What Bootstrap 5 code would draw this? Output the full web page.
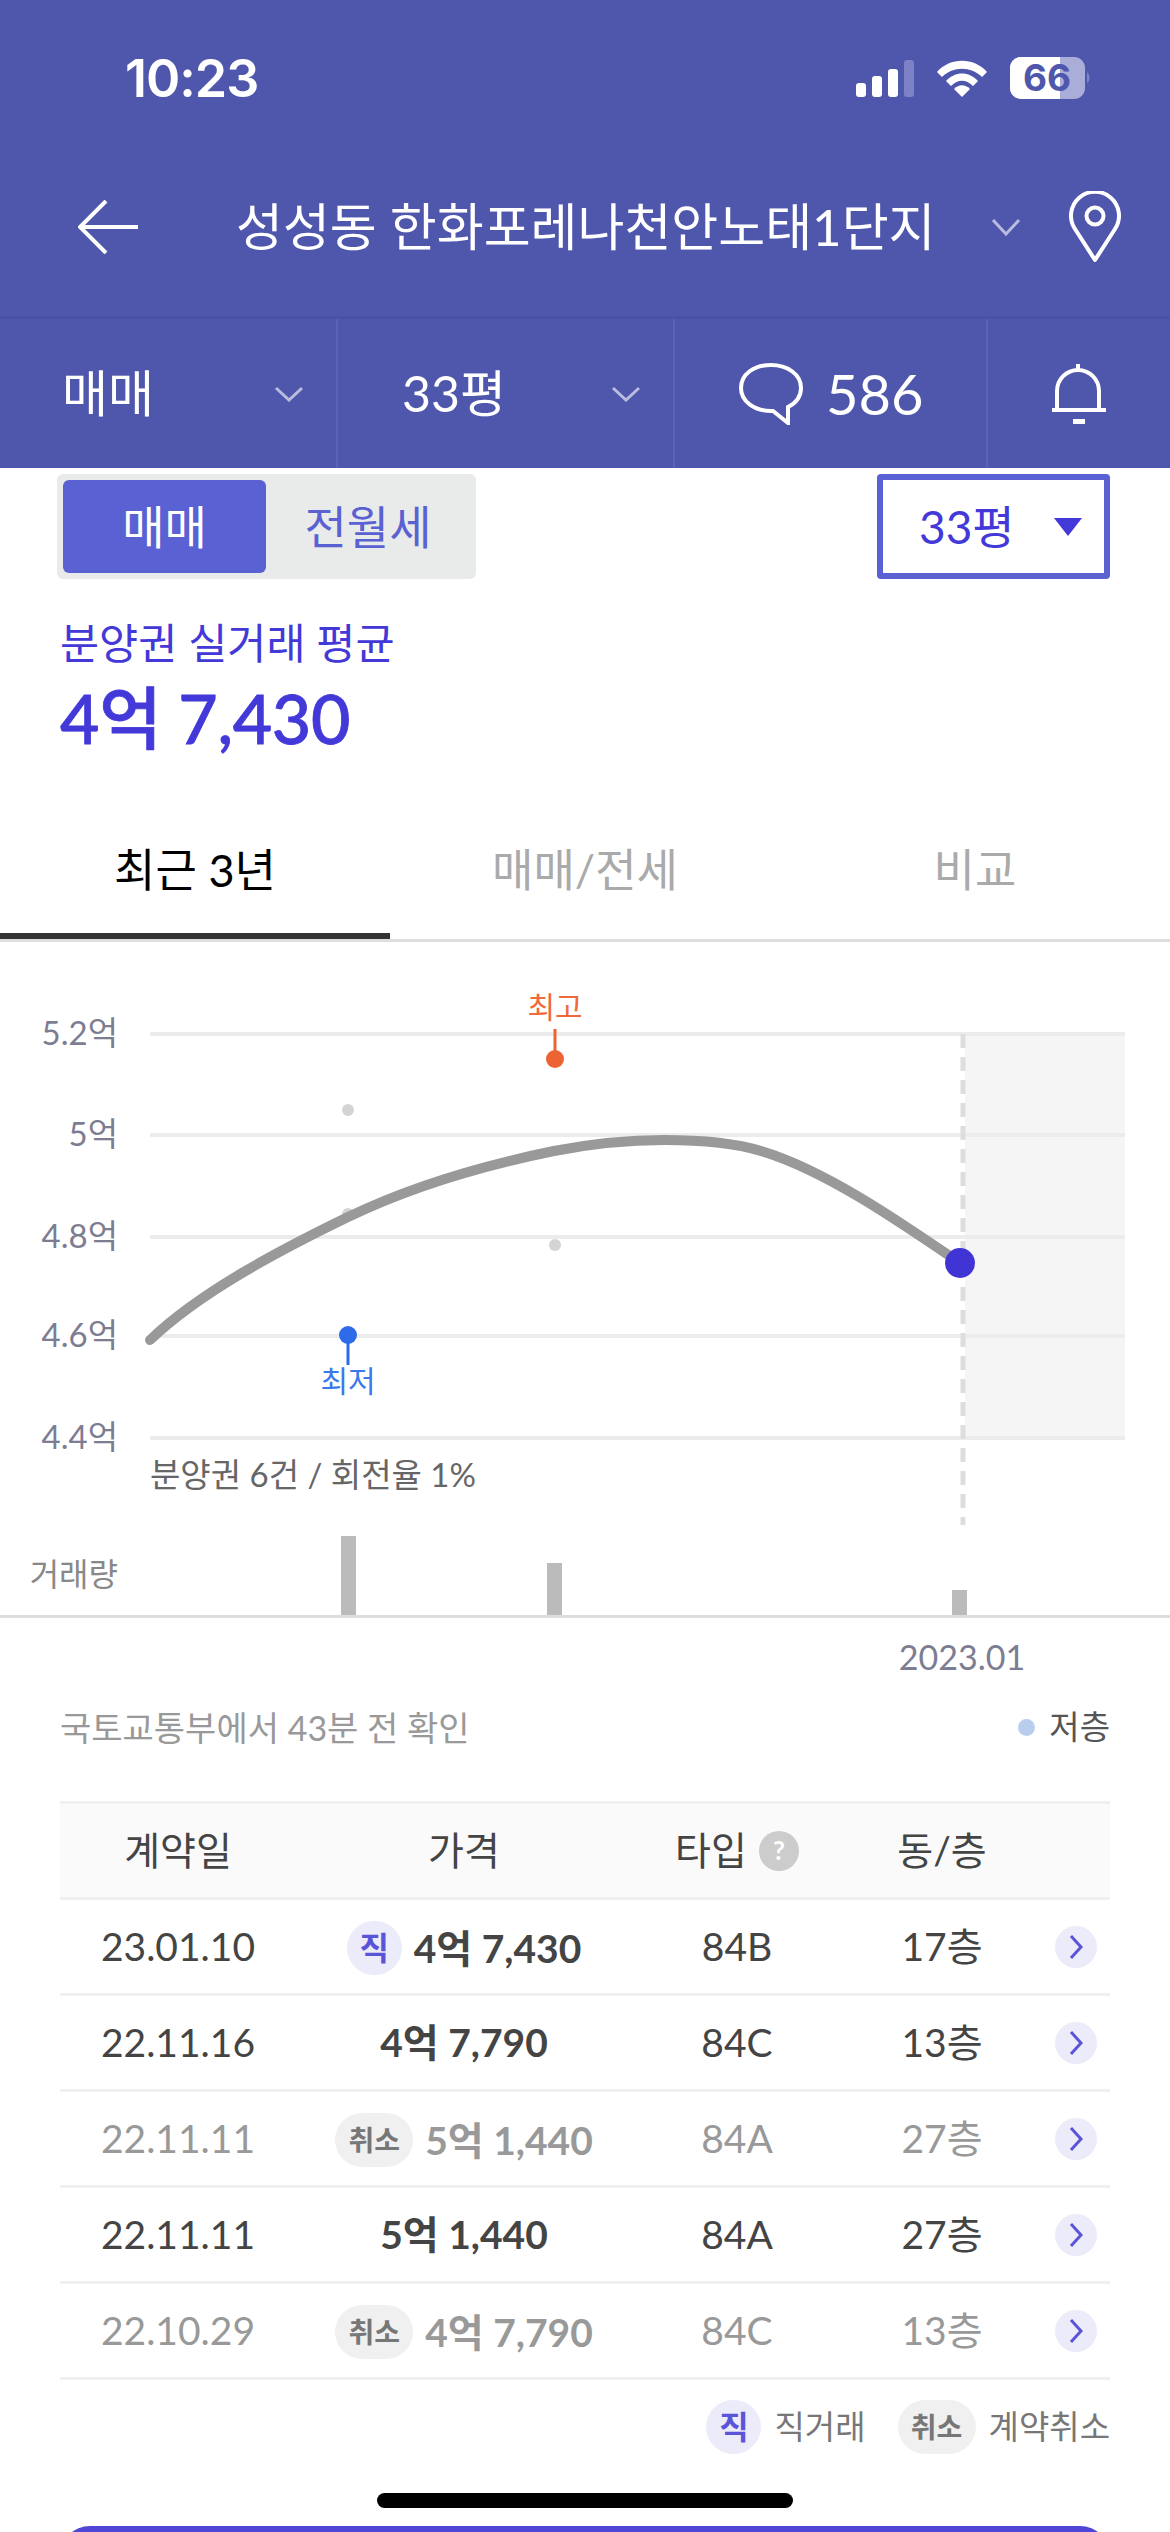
<!DOCTYPE html>
<html lang="ko">
<head>
<meta charset="utf-8">
<link href="https://cdn.jsdelivr.net/npm/bootstrap@5.3.0/dist/css/bootstrap.min.css" rel="stylesheet">
<style>
html,body{height:2532px;overflow:hidden}
body{font-family:Lato,"Noto Sans CJK KR","Noto Sans",sans-serif;background:#fff;color:#444;width:1170px}
.app-head{background:#4f57ac;color:#fff;height:468px}
.status-row{height:150px;padding:6px 78px 0 125px}
.clock{font:600 52px/1 "Inter","Liberation Sans",sans-serif;letter-spacing:-1px;margin-top:1px}
.title-row{height:166px;padding:0 49px 12px 78px}
.title-txt{font-size:51px;font-weight:400;margin-left:98px;white-space:nowrap;width:693px}
.sub-row{height:152px;border-top:3px solid #4a52a4}
.sub-cell{border-right:2px solid #5b63b6;font-size:50px;height:100%}
.sub-a{width:338px;padding:0 32px 0 62px}
.sub-b{width:337px;padding:0 32px 0 64px}
.sub-c{width:313px;padding:0 0 0 64px;gap:23px}
.sub-d{flex:1;border:0}
.num-big{font-size:56px}
.top-row{padding:6px 60px 0 57px}
.seg-wrap{width:419px;height:105px;background:#e9ebeb;border-radius:6px;padding:6px}
.seg-on,.seg-off{font-size:46px;height:93px;border-radius:6px}
.seg-on{width:203px;background:#5a61d2;color:#fff}
.seg-off{flex:1;color:#5a61d2}
.pick-box{width:233px;height:105px;border:6px solid #5a61d2;border-radius:4px;color:#4338d8;font-size:46px;padding:0 22px 0 36px}
.avg-lbl{color:#4338d8;font-size:42.5px;margin:34px 0 0 60px;line-height:60px}
.avg-val{color:#4338d8;font-size:68px;font-weight:500;margin:0 0 0 60px;line-height:90px;letter-spacing:-.3px;-webkit-text-stroke:.8px #4338d8}
.tab-bar{margin-top:49px;height:130px;border-bottom:3px solid #ddd}
.tab-item{width:390px;font-size:45px;color:#aaa;height:127px;padding-bottom:9px}
.tab-on{color:#000;border-bottom:6px solid #333;padding-bottom:3px}
.chart-box{display:block;height:755px;width:1170px}
.chart-box text{font-family:Lato,"Noto Sans CJK KR","Noto Sans",sans-serif}
.info-row{padding:0 60px;height:60px;font-size:34px;color:#999}
.tiny-dot{width:17px;height:17px;border-radius:50%;background:#b9cdee;margin-right:14px}
.legend-tx{color:#555;font-size:33px}
.deal-wrap{margin:44px 60px 0}
table.deal-tbl{table-layout:fixed;width:1050px;margin:0;border-top:3px solid #f0f0f0}
.deal-tbl th,.deal-tbl td{height:96px;padding:0;text-align:center;vertical-align:middle;border-bottom:3px solid #f0f0f0;font-size:39px;color:#444;font-weight:400;background:transparent;box-shadow:none}
.deal-tbl th{background:#fafafa;color:#444}
.deal-tbl tr.off td{color:#999}
.deal-tbl td.price-cell{font-weight:700}
.mark-j,.mark-c{display:inline-flex;align-items:center;justify-content:center;border-radius:27px;height:54px;font-weight:700}
.mark-j{width:55px;background:#ecebfa;color:#5a55d8;font-size:32px}
.mark-c{width:78px;background:#f0f0f0;color:#777;font-size:28px}
.price-line{gap:12px}
.go-btn{width:42px;height:42px;border-radius:50%;background:#ecebfa;margin:0 auto}
.q-mark{width:40px;height:40px;border-radius:50%;background:#ccc;color:#fff;font-size:26px;font-weight:700;margin-left:12px}
.foot-row{padding:20px 60px 0;font-size:33px;color:#777}
.gap-tx{margin-left:13px}
.home-bar{position:absolute;left:377px;top:2493px;width:416px;height:15px;background:#000;border-radius:8px}
.cta-bar{position:absolute;left:60px;top:2526px;width:1050px;height:60px;background:#4f46d8;border-radius:30px 30px 0 0}
</style>
</head>
<body class="position-relative">
<header class="app-head">
  <div class="status-row d-flex align-items-center justify-content-between">
    <div class="clock">10:23</div>
    <div class="d-flex align-items-center" style="gap:23px">
      <svg width="58" height="37" viewBox="0 0 58 37"><g fill="#fff"><rect x="0" y="23" width="10" height="14" rx="3"/><rect x="16" y="16" width="10" height="21" rx="3"/><rect x="32" y="9" width="10" height="28" rx="3"/></g><rect x="48" y="0" width="10" height="37" rx="3" fill="#7c82c5"/></svg>
      <svg width="50" height="37" viewBox="0 0 50 37"><path d="M0 12 C13 -3 37 -3 50 12 L45 17 C34 6 16 6 5 17Z" fill="#fff"/><path d="M9 21 C18 11 32 11 41 21 L36 26 C29 19 21 19 14 26Z" fill="#fff"/><path d="M25 37 L17 29 C22 24 28 24 33 29Z" fill="#fff"/></svg>
      <svg width="82" height="42" viewBox="0 0 82 42"><rect x="0" y="0" width="75" height="42" rx="11" fill="#a9add8"/><path d="M11 0H50V42H11A11 11 0 0 1 0 31V11A11 11 0 0 1 11 0Z" fill="#fff"/><path d="M77 15a7 7 0 0 1 0 11z" fill="#7c82c5"/><text x="37" y="34" text-anchor="middle" font-family="Inter,Liberation Sans,sans-serif" font-size="37" font-weight="700" fill="#4f57ac">66</text></svg>
    </div>
  </div>
  <div class="title-row d-flex align-items-center">
    <svg width="60" height="54" viewBox="0 0 60 54" fill="none" stroke="#fff" stroke-width="4"><path d="M28 1 L2 27 L28 53M2 27H60"/></svg>
    <div class="title-txt">성성동 한화포레나천안노태1단지</div>
    <svg class="ms-auto" width="30" height="18" viewBox="0 0 30 18" fill="none" stroke="#fff" stroke-opacity=".6" stroke-width="3"><path d="M2 2L15 16L28 2"/></svg>
    <svg class="ms-5" width="52" height="72" viewBox="0 0 52 72" fill="none" stroke="#fff" stroke-width="4"><path d="M26 69 L6 38 A24 24 0 1 1 46 38 Z" stroke-linejoin="round"/><circle cx="26" cy="25" r="8.5"/></svg>
  </div>
  <div class="sub-row d-flex">
    <div class="sub-cell sub-a d-flex align-items-center justify-content-between"><span>매매</span><svg width="30" height="16" viewBox="0 0 30 16" fill="none" stroke="#fff" stroke-opacity=".6" stroke-width="3"><path d="M2 2L15 14L28 2"/></svg></div>
    <div class="sub-cell sub-b d-flex align-items-center justify-content-between"><span>33평</span><svg width="30" height="16" viewBox="0 0 30 16" fill="none" stroke="#fff" stroke-opacity=".6" stroke-width="3"><path d="M2 2L15 14L28 2"/></svg></div>
    <div class="sub-cell sub-c d-flex align-items-center">
      <svg width="64" height="62" viewBox="0 0 64 62" fill="none" stroke="#fff" stroke-width="4"><path d="M49 44 C57 40 62 33 62 25 C62 11 48 2 32 2 C15 2 2 11 2 25 C2 38 15 48 32 48 L34 48 L49 60 Z"/></svg>
      <span class="num-big">586</span>
    </div>
    <div class="sub-cell sub-d d-flex align-items-center justify-content-center">
      <svg width="54" height="60" viewBox="0 0 54 60" fill="none" stroke="#fff" stroke-width="4"><path d="M26 0V7M5 46V27A21 21 0 0 1 47 27V46M0 46H54"/><rect x="21" y="55" width="12" height="5" fill="#fff" stroke="none"/></svg>
    </div>
  </div>
</header>
<main>
  <div class="top-row d-flex justify-content-between">
    <div class="seg-wrap d-flex">
      <div class="seg-on d-flex align-items-center justify-content-center">매매</div>
      <div class="seg-off d-flex align-items-center justify-content-center">전월세</div>
    </div>
    <div class="pick-box d-flex align-items-center justify-content-between"><span>33평</span><svg width="28" height="18" viewBox="0 0 28 18"><path d="M0 0H28L14 18Z" fill="#4338d8"/></svg></div>
  </div>
  <div class="avg-lbl">분양권 실거래 평균</div>
  <div class="avg-val">4억 7,430</div>
  <div class="tab-bar d-flex">
    <div class="tab-item tab-on d-flex align-items-center justify-content-center">최근 3년</div>
    <div class="tab-item d-flex align-items-center justify-content-center">매매/전세</div>
    <div class="tab-item d-flex align-items-center justify-content-center">비교</div>
  </div>
  <svg class="chart-box" viewBox="0 942 1170 755">
    <rect x="965" y="1034" width="160" height="406" fill="#f5f5f5"/>
    <g stroke="#ececec" stroke-width="4">
      <path d="M150 1034H1125M150 1135H1125M150 1237H1125M150 1336H1125M150 1438H1125"/>
    </g>
    <path d="M963 1034V1525" stroke="#ddd" stroke-width="5" stroke-dasharray="14 9"/>
    <g fill="#d4d4d4"><circle cx="348" cy="1110" r="6"/><circle cx="348" cy="1214" r="6"/><circle cx="555" cy="1245" r="6"/></g>
    <path d="M150 1340 C200 1292 280 1250 348 1217 C406 1189 480 1166 554 1151 C590 1144 630 1140 664 1140 C700 1140 735 1143 761 1151 C825 1170 900 1222 960 1263" fill="none" stroke="#999" stroke-width="10" stroke-linecap="round"/>
    <circle cx="960" cy="1263" r="15" fill="#4035d4"/>
    <path d="M555 1029V1059" stroke="#ee6333" stroke-width="3"/><circle cx="555" cy="1059" r="9" fill="#ee6333"/>
    <text x="555" y="1018" text-anchor="middle" font-size="30" fill="#ee6a3a">최고</text>
    <path d="M348 1335V1365" stroke="#2d6be8" stroke-width="3"/><circle cx="348" cy="1335" r="9" fill="#2d6be8"/>
    <text x="348" y="1392" text-anchor="middle" font-size="30" fill="#3a78ee">최저</text>
    <g font-size="33" fill="#7d7d92" text-anchor="end">
      <text x="118" y="1045">5.2억</text><text x="118" y="1146">5억</text><text x="118" y="1248">4.8억</text><text x="118" y="1347">4.6억</text><text x="118" y="1449">4.4억</text>
    </g>
    <text x="150" y="1487" font-size="33" fill="#666">분양권 6건 / 회전율 1%</text>
    <text x="118" y="1586" text-anchor="end" font-size="32" fill="#888">거래량</text>
    <g fill="#bbb"><rect x="341" y="1536" width="15" height="81"/><rect x="547" y="1563" width="15" height="54"/><rect x="952" y="1590" width="15" height="27"/></g>
    <path d="M0 1616.5H1170" stroke="#ddd" stroke-width="3"/>
    <text x="962" y="1670" text-anchor="middle" font-size="34" fill="#7d7d92">2023.01</text>
  </svg>
  <div class="info-row d-flex align-items-center">
    <span>국토교통부에서 43분 전 확인</span>
    <span class="tiny-dot ms-auto"></span><span class="legend-tx">저층</span>
  </div>
  <div class="deal-wrap">
    <table class="table deal-tbl">
      <colgroup><col style="width:236px"><col style="width:336px"><col style="width:210px"><col style="width:200px"><col></colgroup>
      <thead><tr><th>계약일</th><th>가격</th><th><span class="d-inline-flex align-items-center">타입<span class="q-mark d-inline-flex align-items-center justify-content-center">?</span></span></th><th>동/층</th><th></th></tr></thead>
      <tbody>
        <tr><td>23.01.10</td><td class="price-cell"><span class="price-line d-inline-flex align-items-center"><span class="mark-j">직</span>4억 7,430</span></td><td>84B</td><td>17층</td><td><span class="go-btn d-flex align-items-center justify-content-center"><svg width="14" height="26" viewBox="0 0 14 26" fill="none" stroke="#5a55d8" stroke-width="3"><path d="M2 2L12 13L2 24"/></svg></span></td></tr>
        <tr><td>22.11.16</td><td class="price-cell">4억 7,790</td><td>84C</td><td>13층</td><td><span class="go-btn d-flex align-items-center justify-content-center"><svg width="14" height="26" viewBox="0 0 14 26" fill="none" stroke="#5a55d8" stroke-width="3"><path d="M2 2L12 13L2 24"/></svg></span></td></tr>
        <tr class="off"><td>22.11.11</td><td class="price-cell"><span class="price-line d-inline-flex align-items-center"><span class="mark-c">취소</span>5억 1,440</span></td><td>84A</td><td>27층</td><td><span class="go-btn d-flex align-items-center justify-content-center"><svg width="14" height="26" viewBox="0 0 14 26" fill="none" stroke="#5a55d8" stroke-width="3"><path d="M2 2L12 13L2 24"/></svg></span></td></tr>
        <tr><td>22.11.11</td><td class="price-cell">5억 1,440</td><td>84A</td><td>27층</td><td><span class="go-btn d-flex align-items-center justify-content-center"><svg width="14" height="26" viewBox="0 0 14 26" fill="none" stroke="#5a55d8" stroke-width="3"><path d="M2 2L12 13L2 24"/></svg></span></td></tr>
        <tr class="off"><td>22.10.29</td><td class="price-cell"><span class="price-line d-inline-flex align-items-center"><span class="mark-c">취소</span>4억 7,790</span></td><td>84C</td><td>13층</td><td><span class="go-btn d-flex align-items-center justify-content-center"><svg width="14" height="26" viewBox="0 0 14 26" fill="none" stroke="#5a55d8" stroke-width="3"><path d="M2 2L12 13L2 24"/></svg></span></td></tr>
      </tbody>
    </table>
  </div>
  <div class="foot-row d-flex justify-content-end align-items-center">
    <span class="mark-j">직</span><span class="gap-tx">직거래</span>
    <span class="mark-c" style="margin-left:32px">취소</span><span class="gap-tx">계약취소</span>
  </div>
</main>
<div class="home-bar"></div>
<div class="cta-bar"></div>
<script src="https://cdn.jsdelivr.net/npm/bootstrap@5.3.0/dist/js/bootstrap.bundle.min.js"></script>
</body>
</html>
